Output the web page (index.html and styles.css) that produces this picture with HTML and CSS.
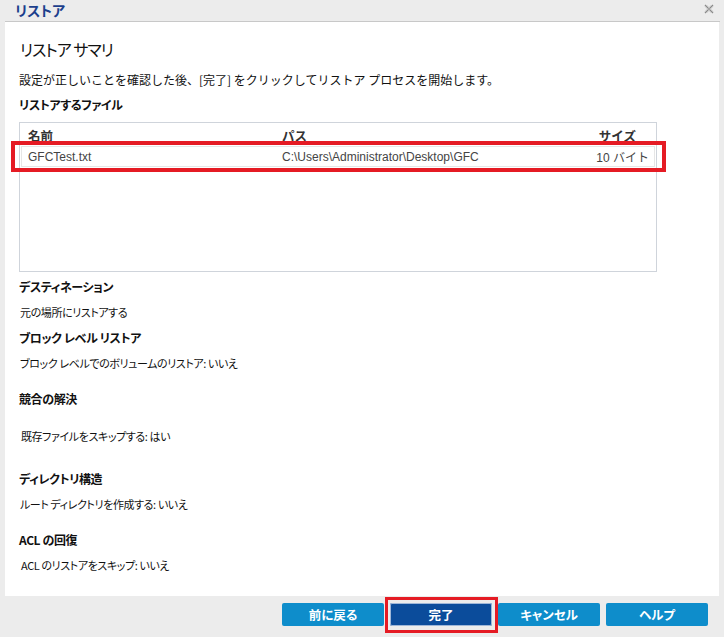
FILE: index.html
```html
<!DOCTYPE html>
<html lang="ja">
<head>
<meta charset="utf-8">
<link rel="stylesheet" href="styles.css">
</head>
<body>
<div class="window">
  <div class="titlebar">
    <span class="title">リストア</span>
    <svg class="close" width="10" height="10" viewBox="0 0 10 10"><path d="M1 1L9 9M9 1L1 9" stroke="#8a8a8a" stroke-width="1.3" fill="none"/><path d="M1 2.5L7.5 9M2.5 1L9 7.5M9 2.5L2.5 9M7.5 1L1 7.5" stroke="#c4c4c4" stroke-width="0.8" fill="none"/></svg>
  </div>
  <div class="content">
    <h1 class="heading">リストア サマリ</h1>
    <p class="desc">設定が正しいことを確認した後、[完了] をクリックしてリストア プロセスを開始します。</p>
    <h2 class="label files-label">リストアするファイル</h2>
    <div class="table-wrap">
      <div class="table">
        <div class="thead">
          <span class="c-name">名前</span>
          <span class="c-path">パス</span>
          <span class="c-size">サイズ</span>
        </div>
        <div class="trow">
          <span class="c-name">GFCTest.txt</span>
          <span class="c-path">C:\Users\Administrator\Desktop\GFC</span>
          <span class="c-size">10 バイト</span>
        </div>
      </div>
      <div class="highlight row-highlight"></div>
    </div>
    <h2 class="label mt-7">デスティネーション</h2>
    <p class="value mt-9">元の場所にリストアする</p>
    <h2 class="label mt-10">ブロック レベル リストア</h2>
    <p class="value mt-9">ブロック レベルでのボリュームのリストア: いいえ</p>
    <h2 class="label mt-20">競合の解決</h2>
    <p class="value indent2 mt-21">既存ファイルをスキップする: はい</p>
    <h2 class="label mt-27">ディレクトリ構造</h2>
    <p class="value mt-9">ルート ディレクトリを作成する: いいえ</p>
    <h2 class="label mt-20">ACL の回復</h2>
    <p class="value indent2 mt-9">ACL のリストアをスキップ: いいえ</p>
  </div>
  <div class="footer">
    <button class="btn">前に戻る</button>
    <div class="btn-wrap">
      <button class="btn btn-primary">完了</button>
      <div class="highlight btn-highlight"></div>
    </div>
    <button class="btn">キャンセル</button>
    <button class="btn">ヘルプ</button>
  </div>
</div>
</body>
</html>
```

FILE: styles.css
```css
* { box-sizing: border-box; }
html, body {
  margin: 0;
  padding: 0;
}
body {
  width: 724px;
  height: 637px;
  background: #ececec;
  font-family: "Liberation Sans", "Noto Sans CJK JP", sans-serif;
  color: #111;
  overflow: hidden;
}
.window {
  display: flex;
  flex-direction: column;
  height: 637px;
}
.titlebar {
  height: 22px;
  display: flex;
  align-items: center;
  justify-content: space-between;
  padding: 0 6px 1px 10px;
  background: #ececec;
  border-bottom: 1px solid #c8c8c8;
  margin-left: 5px;
  margin-right: 4px;
}
.title {
  font-family: "Noto Sans CJK JP", sans-serif;
  font-weight: 700;
  font-size: 14px;
  color: #1c3f8c;
  line-height: 18px;
  font-feature-settings: "palt";
}
.close { display: block; margin-top: -2px; }
.content {
  height: 574px;
  margin: 0 5px 0 5px;
  width: 714px;
  background: #fff;
  padding: 17px 14px 0 14px;
  font-family: "Noto Sans CJK JP", sans-serif;
}
.heading {
  margin: 0;
  font-size: 16px;
  font-weight: 400;
  line-height: 20px;
  color: #111;
  padding-left: 1px;
  letter-spacing: -1px;
  font-feature-settings: "palt";
}
.desc {
  margin: 13px 0 0 0;
  font-size: 12px;
  line-height: 16px;
  color: #111;
}
.label {
  margin: 0;
  font-size: 12px;
  font-weight: 700;
  line-height: 16px;
  color: #111;
  letter-spacing: -0.4px;
  font-feature-settings: "palt";
}
.files-label { margin-top: 9px; }
.value {
  margin: 0;
  font-size: 11px;
  line-height: 16px;
  color: #111;
  padding-left: 1px;
  letter-spacing: -0.4px;
  font-feature-settings: "palt";
}
.indent2 { padding-left: 2px; }
.mt-7 { margin-top: 7px; }
.mt-9 { margin-top: 9px; }
.mt-10 { margin-top: 10px; }
.mt-20 { margin-top: 20px; }
.mt-21 { margin-top: 21px; }
.mt-27 { margin-top: 27px; }

.table-wrap {
  position: relative;
  margin-top: 9px;
  width: 638px;
}
.table {
  height: 150px;
  border: 1px solid #cfd4db;
  padding: 0 1px;
  font-family: "Liberation Sans", "Noto Sans CJK JP", sans-serif;
}
.thead, .trow {
  display: grid;
  grid-template-columns: 254px 1fr auto;
  align-items: center;
}
.thead {
  height: 22px;
  padding: 2px 19px 0 7px;
  font-size: 12.5px;
  font-weight: 700;
  color: #333;
  font-family: "Noto Sans CJK JP", sans-serif;
}
.trow {
  height: 21px;
  margin-top: 1px;
  border: 1px solid #e6e6e6;
  padding: 0 5px 0 6px;
  font-size: 12px;
  color: #444;
}
.highlight {
  position: absolute;
  border: 4px solid #e51b24;
  pointer-events: none;
}
.row-highlight {
  left: -8px;
  top: 19px;
  width: 655px;
  height: 31px;
}

.footer {
  flex: 1;
  display: flex;
  align-items: flex-start;
  justify-content: flex-end;
  gap: 6px;
  padding: 7px 16px 0 0;
}
.btn {
  width: 102px;
  height: 23px;
  border: none;
  border-radius: 2px;
  background: #0e8dcb;
  color: #fff;
  font-family: "Noto Sans CJK JP", sans-serif;
  font-weight: 700;
  font-size: 12.5px;
  line-height: 23px;
  padding: 0;
  font-feature-settings: "palt";
}
.btn-wrap {
  position: relative;
}
.btn-primary {
  display: block;
  background: #0b4c9b;
  box-shadow: inset 0 0 0 1px #9fb7d8;
}
.btn-highlight {
  left: -5px;
  top: -6px;
  width: 113px;
  height: 36px;
  border-width: 3px;
}
```
